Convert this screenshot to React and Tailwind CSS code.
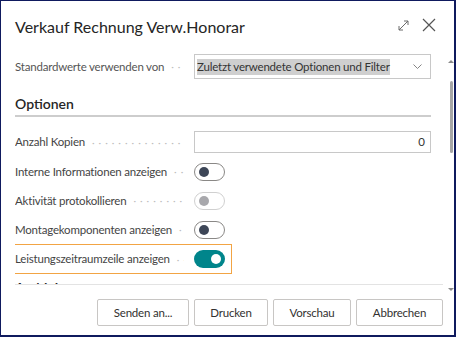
import React from "react";

const Dots = ({ className = "" }) => (
    <span className={"flex-1 min-w-0 overflow-hidden whitespace-nowrap text-[#bdbdbd] text-[10px] tracking-[4px] pl-[7px] " + className}>
        {"····························"}
    </span>
);

const Toggle = ({ state }) => {
    if (state === "on") {
        return (
            <div className="shrink-0 w-[31px] h-[18px] rounded-full bg-[#00858b] flex items-center justify-end pr-[4px]">
                <div className="w-[10px] h-[10px] rounded-full bg-white" />
            </div>
        );
    }
    const disabled = state === "disabled";
    return (
        <div className={"shrink-0 w-[31px] h-[18px] rounded-full border flex items-center pl-[4px] " + (disabled ? "border-[#d0d0d0]" : "border-[#8a8886]")}>
            <div className={"w-[10px] h-[10px] rounded-full " + (disabled ? "bg-[#a8a8ac]" : "bg-[#3d4657]")} />
        </div>
    );
};

const Label = ({ children, color = "text-[#444]" }) => (
    <div className={"shrink-0 w-[179px] flex items-center overflow-hidden text-[11.5px] tracking-[-0.2px] " + color}>
        <span className="whitespace-nowrap">{children}</span>
        <Dots className="mr-[10px]" />
    </div>
);

const Row = ({ label, children, highlight }) => (
    <div className={highlight
        ? "flex items-center h-[30px] -ml-[6px] w-[223px] pl-[5px] border border-[#f2a444]"
        : "flex items-center h-[29px]"}>
        <Label>{label}</Label>
        {children}
    </div>
);

const Button = ({ children, w }) => (
    <button className={"h-[27px] border border-[#c8c6c4] rounded-[2px] bg-white text-[11.5px] tracking-[-0.2px] text-[#323130] " + w}>
        {children}
    </button>
);

export default function App() {
    return (
        <div className="w-[456px] h-[337px] bg-white border-[#0f1a5e] border-l border-t border-r-2 border-b-2 flex flex-col font-['Lato',sans-serif] overflow-hidden">
            {/* header */}
            <div className="h-[43px] flex items-start pt-[15px] pl-[14px]">
                <h1 className="text-[16px] leading-[22px] text-[#252525] flex-1 whitespace-nowrap">Verkauf Rechnung Verw.Honorar</h1>
                <div className="flex items-center gap-[12px] pt-[2px] pr-[18px]">
                    <svg width="13" height="13" viewBox="0 0 13 13" fill="none" stroke="#6b6b6b" strokeWidth="1">
                        <path d="M2 11 L11 2" />
                        <path d="M7 2 H11 V6" />
                        <path d="M2 7 V11 H6" />
                    </svg>
                    <svg width="14" height="14" viewBox="0 0 14 14" fill="none" stroke="#555" strokeWidth="1.2">
                        <path d="M1 1 L13 13 M13 1 L1 13" />
                    </svg>
                </div>
            </div>

            {/* content */}
            <div className="flex h-[241px]">
                <div className="flex-1 ml-[14px] border-b border-[#e3e3e3] overflow-hidden pr-[12px]">
                    <div className="flex items-center h-[25px] mt-[10px]">
                        <Label color="text-[#555]">Standardwerte verwenden von</Label>
                        <div className="flex-1 min-w-0 h-[25px] border border-[#c8c8c8] flex items-center pl-[2px] pr-[8px]">
                            <span className="bg-[#cfcfcf] text-[11.5px] tracking-[-0.2px] text-[#333] leading-[16px] whitespace-nowrap">Zuletzt verwendete Optionen und Filter</span>
                            <span className="flex-1" />
                            <svg width="9" height="5" viewBox="0 0 9 5" fill="none" stroke="#777" strokeWidth="0.9" className="shrink-0">
                                <path d="M0.5 0.5 L4.5 4.5 L8.5 0.5" />
                            </svg>
                        </div>
                    </div>

                    <div className="mt-[15px] border-b-2 border-[#cdcdcd] pb-[2px]">
                        <h2 className="text-[14px] leading-[19px] font-semibold text-[#262626]">Optionen</h2>
                    </div>

                    <div className="flex items-center h-[22px] mt-[14px]">
                        <Label>Anzahl Kopien</Label>
                        <div className="flex-1 h-[22px] border border-[#c8c8c8] flex items-center justify-end pr-[5px] text-[11.5px] text-[#333]">0</div>
                    </div>

                    <div className="mt-[4px]">
                        <Row label="Interne Informationen anzeigen"><Toggle state="off" /></Row>
                        <Row label="Aktivität protokollieren"><Toggle state="disabled" /></Row>
                        <Row label="Montagekomponenten anzeigen"><Toggle state="off" /></Row>
                        <Row label="Leistungszeitraumzeile anzeigen" highlight><Toggle state="on" /></Row>
                    </div>

                    <h2 className="mt-[4px] text-[14px] leading-[19px] font-semibold text-[#262626]">Archivieren</h2>
                </div>

                {/* scrollbar */}
                <div className="w-[6px] ml-[5px] flex flex-col items-center pt-[16px] h-[247px]">
                    <div className="w-0 h-0 border-l-[3px] border-r-[3px] border-b-[3px] border-l-transparent border-r-transparent border-b-[#8a8a8a]" />
                    <div className="w-[3px] h-[72px] bg-[#a6a6a6] rounded-full mt-[18px]" />
                    <div className="flex-1" />
                    <div className="w-0 h-0 border-l-[3px] border-r-[3px] border-t-[3px] border-l-transparent border-r-transparent border-t-[#8a8a8a]" />
                </div>
            </div>

            {/* footer */}
            <div className="flex justify-end gap-[5px] pt-[14px] pr-[11px]">
                <Button w="w-[92px]">Senden an...</Button>
                <Button w="w-[74px]">Drucken</Button>
                <Button w="w-[78px]">Vorschau</Button>
                <Button w="w-[87px]">Abbrechen</Button>
            </div>
        </div>
    );
}
